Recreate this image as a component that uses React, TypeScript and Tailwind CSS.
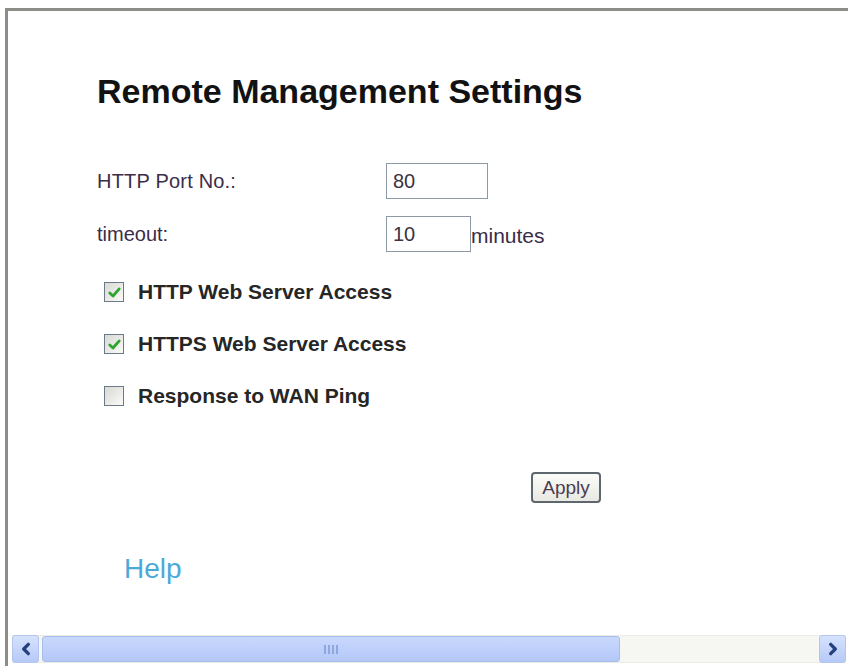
import React from 'react';

const font = { fontFamily: '"Liberation Sans", Arial, Helvetica, sans-serif' };

const CheckBox = ({ checked }: { checked: boolean }) => (
    <span className="w-[20px] h-[20px] border-[1.5px] border-[#6b7a8b] bg-gradient-to-br from-[#d7d9d4] to-[#fbfbf9] flex items-center justify-center shrink-0">
        {checked && (
            <svg width="15" height="15" viewBox="0 0 14 14" fill="none">
                <path d="M2.6 7.4 L5.6 10.3 L11.4 3.6" stroke="#2fa52f" strokeWidth="2.6" strokeLinecap="round" strokeLinejoin="round" />
            </svg>
        )}
    </span>
);

const ScrollButton = ({ dir }: { dir: 'left' | 'right' }) => (
    <div className="w-[27px] h-[28px] rounded-[3px] border border-[#b3c4ee] bg-gradient-to-b from-[#d6e2fd] to-[#b6c9f7] flex items-center justify-center shrink-0">
        <svg width="14" height="14" viewBox="0 0 12 12" fill="none">
            {dir === 'left' ? (
                <path d="M8 2 L4 6 L8 10" stroke="#24407d" strokeWidth="2.8" strokeLinecap="round" strokeLinejoin="round" />
            ) : (
                <path d="M4 2 L8 6 L4 10" stroke="#24407d" strokeWidth="2.8" strokeLinecap="round" strokeLinejoin="round" />
            )}
        </svg>
    </div>
);

export default function App() {
    const options = [
        { label: 'HTTP Web Server Access', checked: true },
        { label: 'HTTPS Web Server Access', checked: true },
        { label: 'Response to WAN Ping', checked: false },
    ];

    return (
        <div className="w-[854px] h-[670px] bg-white pt-[8px] pl-[5px] pr-[6px] pb-[4px] flex flex-col" style={font}>
            <div className="flex-1 flex flex-col border-t-[3px] border-l-[3px] border-[#8b8d87]">
                <div className="flex-1 pl-[89px] pt-[60px]">
                    <h1 className="text-[34px] leading-[40px] font-bold text-[#121212]">Remote Management Settings</h1>

                    <div className="mt-[52px] flex flex-col gap-[17px]">
                        <div className="flex items-center h-[36px]">
                            <span className="w-[289px] text-[20px] tracking-[0.2px] text-[#3a2d47]">HTTP Port No.:</span>
                            <div className="w-[102px] h-[36px] border border-[#8d9aa6] flex items-center pl-[6px] text-[20px] text-[#3b3340]">80</div>
                        </div>
                        <div className="flex items-center h-[36px]">
                            <span className="w-[289px] text-[20px] text-[#3a2d47]">timeout:</span>
                            <div className="w-[85px] h-[36px] border border-[#8d9aa6] flex items-center pl-[6px] text-[20px] text-[#3b3340]">10</div>
                            <span className="text-[21px] text-[#3a2d47] mt-[4px]">minutes</span>
                        </div>
                    </div>

                    <div className="mt-[30px] flex flex-col gap-[32px] pl-[7px]">
                        {options.map((o) => (
                            <div key={o.label} className="flex items-center h-[20px] gap-[14px]">
                                <CheckBox checked={o.checked} />
                                <span className="text-[21px] font-bold text-[#262626]">{o.label}</span>
                            </div>
                        ))}
                    </div>

                    <div className="mt-[66px] pl-[434px]">
                        <button className="w-[70px] h-[31px] rounded-[4px] border-2 border-[#5e666e] bg-gradient-to-b from-[#fbfbf8] to-[#e9e9e3] text-[19px] leading-none text-[#4a3d52] flex items-center justify-center">
                            Apply
                        </button>
                    </div>

                    <div className="mt-[50px] pl-[27px] text-[28px] leading-[32px] text-[#4ba9da]">Help</div>
                </div>

                <div className="ml-[4px] mr-[2px] mb-[3px] h-[28px] flex items-center bg-[#f6f6f2] border-y border-[#ecece6]">
                    <ScrollButton dir="left" />
                    <div className="ml-[3px] w-[578px] h-[26px] rounded-[3px] border border-[#a9bdeb] bg-gradient-to-b from-[#c9d8fd] to-[#b4c8f8] flex items-center justify-center gap-[2px]">
                        {[0, 1, 2, 3].map((i) => (
                            <span key={i} className="w-[2px] h-[9px] bg-[#8fa7e0]" />
                        ))}
                    </div>
                    <div className="flex-1" />
                    <ScrollButton dir="right" />
                </div>
            </div>
        </div>
    );
}
